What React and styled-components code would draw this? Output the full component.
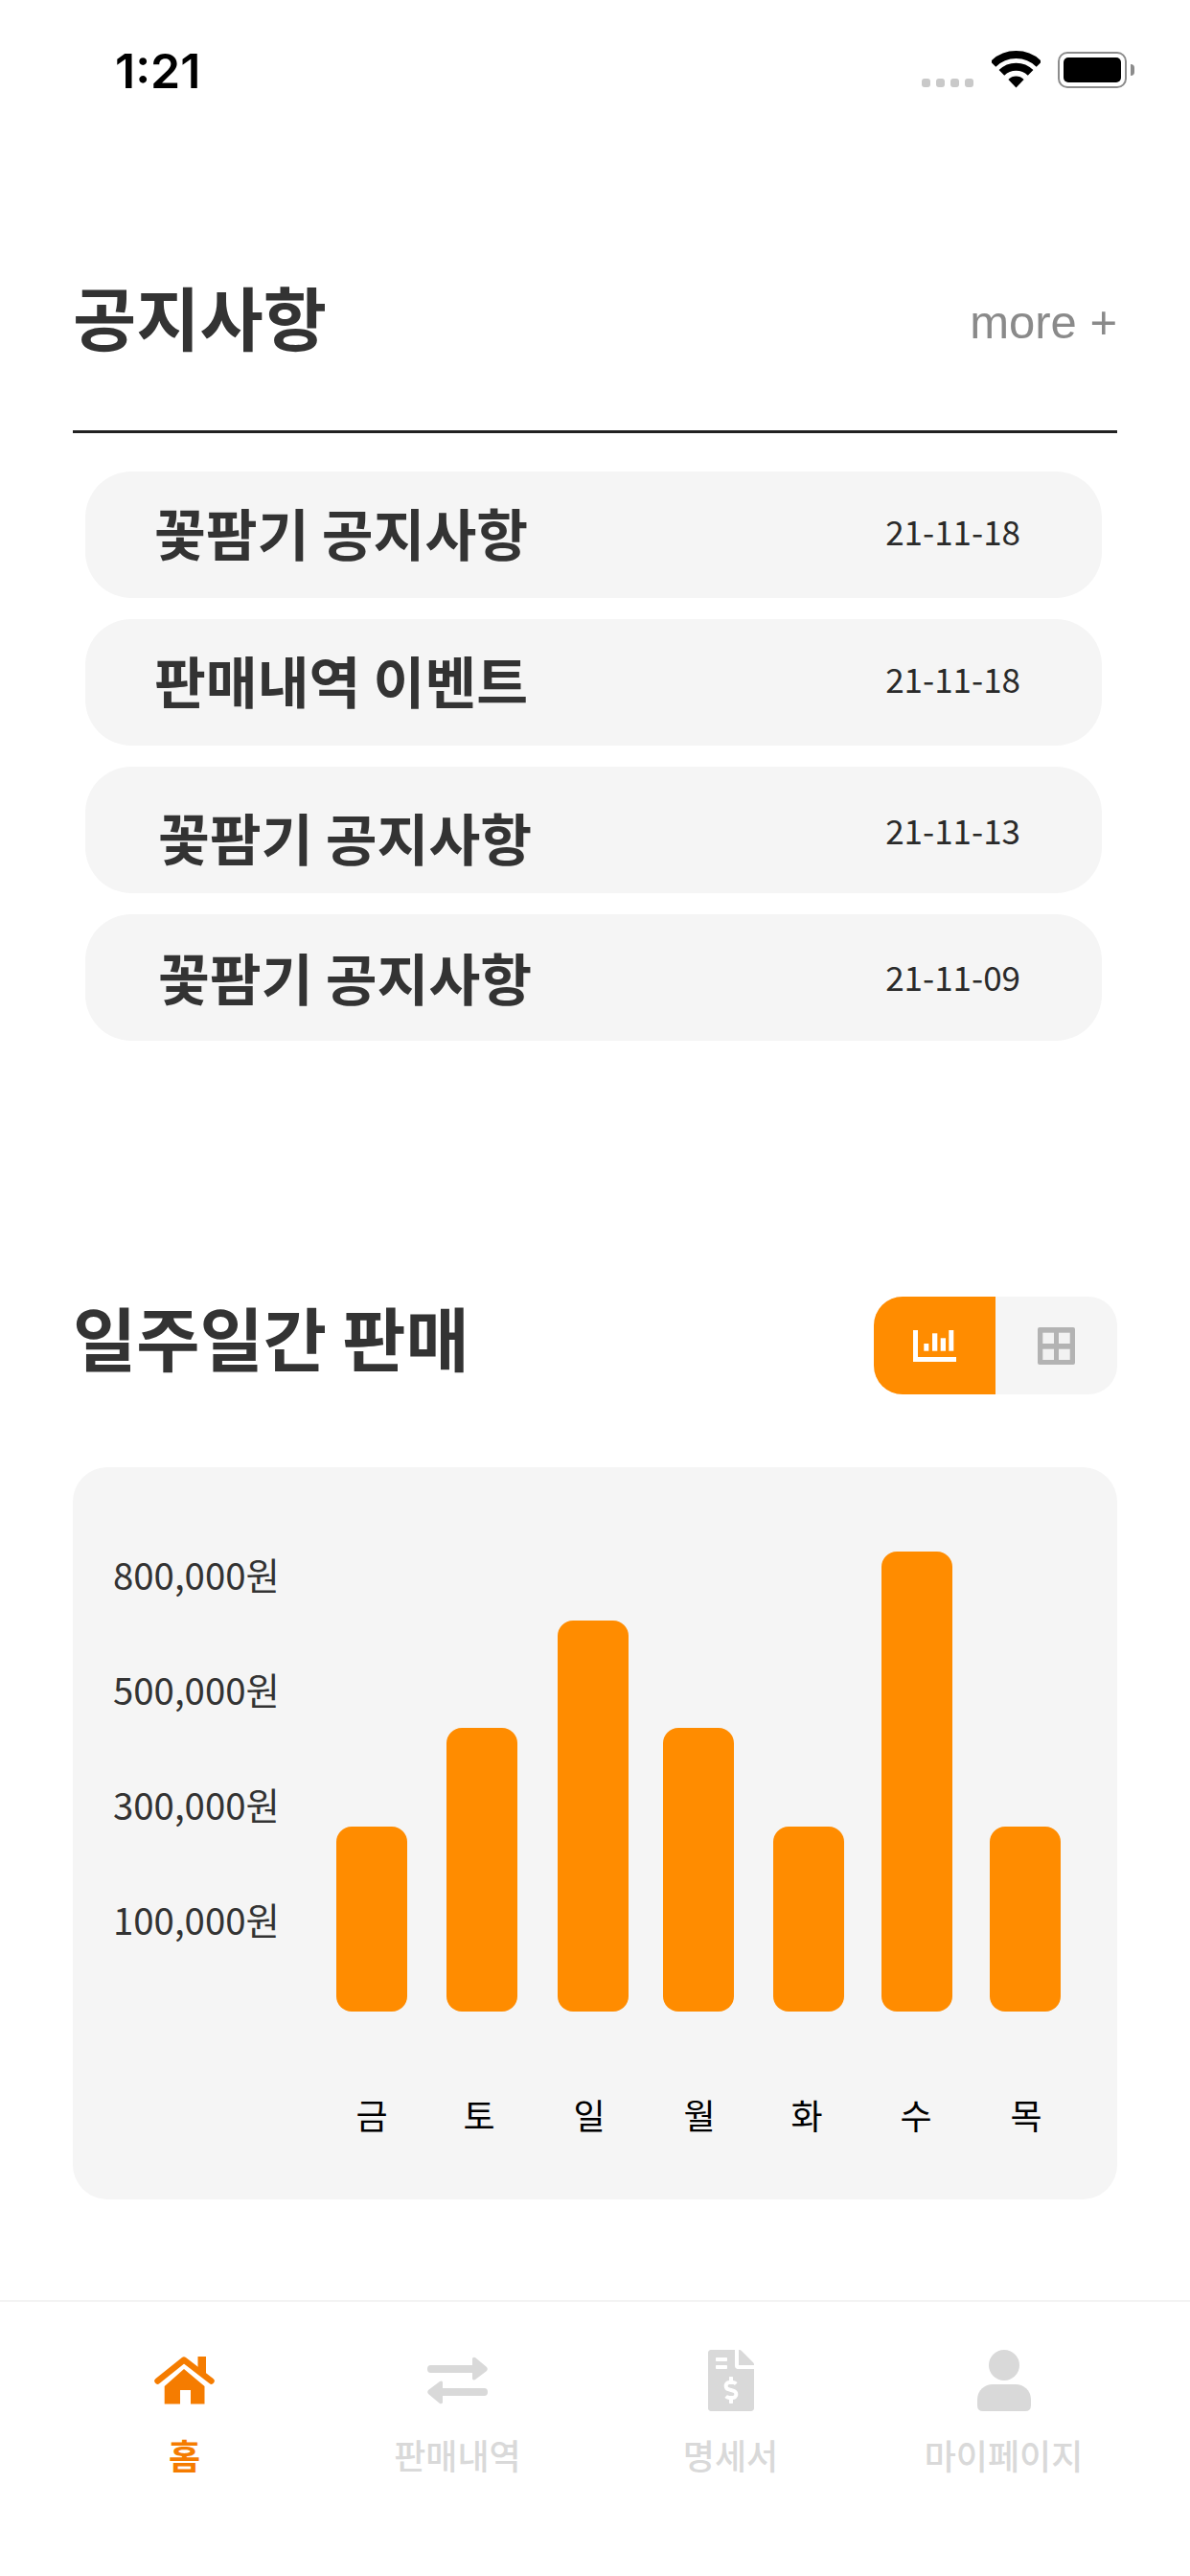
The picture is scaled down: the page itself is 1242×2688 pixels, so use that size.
import React from "react";
import styled, { createGlobalStyle } from "styled-components";
import { FaFileInvoiceDollar } from "react-icons/fa";

const KR = `"Noto Sans CJK KR", "Noto Sans", sans-serif`;

const notices = [
  { title: "꽃팜기 공지사항", date: "21-11-18", inset: 72, drop: -6, dateDrop: -8 },
  { title: "판매내역 이벤트", date: "21-11-18", inset: 72, drop: -6, dateDrop: -8 },
  { title: "꽃팜기 공지사항", date: "21-11-13", inset: 76, drop: 14, dateDrop: 0 },
  { title: "꽃팜기 공지사항", date: "21-11-09", inset: 76, drop: -2, dateDrop: -2 },
];

const axis = ["800,000원", "500,000원", "300,000원", "100,000원"];

const bars = [
  { height: 193, gap: 0 },
  { height: 296, gap: 41 },
  { height: 408, gap: 42 },
  { height: 296, gap: 36 },
  { height: 193, gap: 41 },
  { height: 480, gap: 39 },
  { height: 193, gap: 39 },
];

const days = [
  { label: "금", gap: 0 },
  { label: "토", gap: 52 },
  { label: "일", gap: 55 },
  { label: "월", gap: 55 },
  { label: "화", gap: 52 },
  { label: "수", gap: 54 },
  { label: "목", gap: 55 },
];

const App = () => {
  return (
    <Page>
      <GlobalStyle />
      <StatusBar>
        <Clock>1:21</Clock>
        <StatusIcons>
          <SignalDots>
            <i />
            <i />
            <i />
            <i />
          </SignalDots>
          <WifiIcon />
          <Battery>
            <BatteryFill />
          </Battery>
          <BatteryNub />
        </StatusIcons>
      </StatusBar>

      <Section>
        <NoticeHead>
          <Title>공지사항</Title>
          <More>more +</More>
        </NoticeHead>
        <Divider />
        <NoticeList>
          {notices.map((n, i) => (
            <NoticeRow key={i} $inset={n.inset}>
              <NoticeTitle $drop={n.drop}>{n.title}</NoticeTitle>
              <NoticeDate $drop={n.dateDrop}>{n.date}</NoticeDate>
            </NoticeRow>
          ))}
        </NoticeList>

        <WeekHead>
          <WeekTitle>일주일간 판매</WeekTitle>
          <Toggle>
            <ToggleButton $active>
              <ChartIcon />
            </ToggleButton>
            <ToggleButton>
              <GridIcon />
            </ToggleButton>
          </Toggle>
        </WeekHead>

        <ChartCard>
          <Axis>
            {axis.map((a) => (
              <AxisLabel key={a}>{a}</AxisLabel>
            ))}
          </Axis>
          <Plot>
            <BarRow>
              {bars.map((b, i) => (
                <Bar key={i} $height={b.height} $gap={b.gap} />
              ))}
            </BarRow>
            <DayRow>
              {days.map((d) => (
                <Day key={d.label} $gap={d.gap}>
                  {d.label}
                </Day>
              ))}
            </DayRow>
          </Plot>
        </ChartCard>
      </Section>

      <TabBar>
        <Tab $active>
          <TabIcon>
            <HomeIcon />
          </TabIcon>
          <TabLabel $active>홈</TabLabel>
        </Tab>
        <Tab>
          <TabIcon>
            <SwapIcon />
          </TabIcon>
          <TabLabel>판매내역</TabLabel>
        </Tab>
        <Tab>
          <TabIcon>
            <FaFileInvoiceDollar size={64} color="#d9d9d9" />
          </TabIcon>
          <TabLabel>명세서</TabLabel>
        </Tab>
        <Tab>
          <TabIcon>
            <PersonIcon />
          </TabIcon>
          <TabLabel>마이페이지</TabLabel>
        </Tab>
      </TabBar>
    </Page>
  );
};

export default App;

const WifiIcon = () => (
  <svg width="51" height="39" viewBox="0 0 51 39">
    <path d="M1.5 14A34 34 0 0 1 49.5 14" fill="none" stroke="#000" strokeWidth="8" />
    <path d="M10.4 22.9A21.4 21.4 0 0 1 40.6 22.9" fill="none" stroke="#000" strokeWidth="8" />
    <path d="M25.5 38.5L17.4 30A11.4 11.4 0 0 1 33.6 30Z" fill="#000" />
  </svg>
);

const ChartIcon = () => (
  <svg width="45" height="33" viewBox="0 0 45 33" fill="#fff">
    <path d="M0 0h5v28h40v5H0z" />
    <rect x="11.3" y="14" width="5" height="7.7" />
    <rect x="20" y="3.3" width="5.3" height="18.4" />
    <rect x="28.7" y="8.3" width="5.3" height="13.4" />
    <rect x="37.3" y="0" width="5" height="21.7" />
  </svg>
);

const GridIcon = () => (
  <svg width="39" height="39" viewBox="0 0 39 39">
    <rect width="39" height="39" rx="2" fill="#b3b3b3" />
    <rect x="5.3" y="5.7" width="11.7" height="11.3" fill="#f2f2f2" />
    <rect x="22" y="5.7" width="11.7" height="11.3" fill="#f2f2f2" />
    <rect x="5.3" y="22.7" width="11.7" height="11.3" fill="#f2f2f2" />
    <rect x="22" y="22.7" width="11.7" height="11.3" fill="#f2f2f2" />
  </svg>
);

const HomeIcon = () => (
  <svg width="63" height="50" viewBox="0 0 63 50" fill="#f57c00">
    <rect x="45.500" y="0" width="8.500" height="18" />
    <path
      d="M3.500 25.500L31 3.500L59.500 25.500"
      fill="none"
      stroke="#f57c00"
      strokeWidth="6.500"
      strokeLinecap="round"
      strokeLinejoin="round"
    />
    <path d="M10.700 31L31 13L52.500 31V49.500H38V35H27V49.500H10.700Z" />
  </svg>
);

const SwapIcon = () => (
  <svg width="63" height="50" viewBox="0 0 63 50" fill="#d9d9d9">
    <path d="M3.500 9H47V2.500Q47 0 50 1L62 11Q63.500 13 62 15L50 24Q47 25.500 47 22.500V17H3.500Q0 17 0 13T3.500 9Z" />
    <path d="M59.500 33H16V27.500Q16 24.500 13 26L1 35Q-.5 37 1 39L13 49Q16 50 16 47.500V41H59.500Q63 41 63 37T59.500 33Z" />
  </svg>
);

const PersonIcon = () => (
  <svg width="56" height="64" viewBox="0 0 56 64" fill="#d9d9d9">
    <ellipse cx="28" cy="16" rx="16" ry="16" />
    <path d="M0 58V52C0 42 8 36 16 36H40C48 36 56 42 56 52V58Q56 64 50 64H6Q0 64 0 58Z" />
  </svg>
);

const GlobalStyle = createGlobalStyle`
  html, body {
    margin: 0;
    padding: 0;
    background: #fff;
  }
  * {
    box-sizing: border-box;
  }
`;

const Page = styled.div`
  width: 1242px;
  height: 2688px;
  overflow: hidden;
  background: #fff;
  font-family: ${KR};
`;

const StatusBar = styled.div`
  display: flex;
  justify-content: space-between;
  height: 130px;
  padding: 48px 58px 0 120px;
`;

const Clock = styled.div`
  font-family: "Inter", "Liberation Sans", sans-serif;
  font-weight: 600;
  font-size: 50px;
  line-height: 52px;
  height: 52px;
  color: #000;
`;

const StatusIcons = styled.div`
  display: flex;
  align-items: flex-end;
  height: 44px;
`;

const SignalDots = styled.div`
  display: flex;
  gap: 6px;
  margin-right: 19px;
  padding-bottom: 1px;

  i {
    display: block;
    width: 9px;
    height: 9px;
    border-radius: 3px;
    background: #c9c9c9;
  }
`;

const Battery = styled.div`
  width: 72px;
  height: 38px;
  margin-left: 18px;
  padding: 4px;
  border: 2px solid #8c8c8c;
  border-radius: 10px;
  background: #fff;
`;

const BatteryFill = styled.div`
  width: 100%;
  height: 100%;
  border-radius: 5px;
  background: #000;
`;

const BatteryNub = styled.div`
  width: 4px;
  height: 12px;
  margin: 0 0 13px 4px;
  border-radius: 0 4px 4px 0;
  background: #8c8c8c;
`;

const Section = styled.div`
  padding: 0 76px;
`;

const NoticeHead = styled.div`
  display: flex;
  align-items: center;
  justify-content: space-between;
  height: 90px;
  margin-top: 160px;
`;

const Title = styled.h1`
  margin: 0;
  padding-bottom: 12px;
  font-size: 72px;
  font-weight: 700;
  line-height: 90px;
  color: #333;
`;

const More = styled.span`
  font-family: "Liberation Sans", sans-serif;
  font-size: 49px;
  color: #8a8a8a;
  padding-top: 2px;
`;

const Divider = styled.div`
  height: 3px;
  margin-top: 69px;
  background: #222;
`;

const NoticeList = styled.div`
  display: flex;
  flex-direction: column;
  gap: 22px;
  margin: 40px 16px 0 13px;
`;

const NoticeRow = styled.div`
  display: flex;
  align-items: center;
  justify-content: space-between;
  height: 132px;
  padding: 0 85px 0 ${(p) => p.$inset}px;
  border-radius: 48px;
  background: #f5f5f5;
`;

const NoticeTitle = styled.div`
  padding-top: ${(p) => Math.max(p.$drop, 0)}px;
  padding-bottom: ${(p) => Math.max(-p.$drop, 0)}px;
  font-size: 58.5px;
  font-weight: 700;
  line-height: 80px;
  color: #333;
`;

const NoticeDate = styled.div`
  padding-top: ${(p) => Math.max(p.$drop, 0)}px;
  padding-bottom: ${(p) => Math.max(-p.$drop, 0)}px;
  font-size: 35px;
  line-height: 50px;
  color: #2a2a2a;
`;

const WeekHead = styled.div`
  display: flex;
  align-items: center;
  justify-content: space-between;
  height: 102px;
  margin-top: 267px;
`;

const WeekTitle = styled.h2`
  margin: 0;
  padding-bottom: 20px;
  font-size: 72px;
  font-weight: 700;
  line-height: 90px;
  color: #333;
`;

const Toggle = styled.div`
  display: flex;
  height: 102px;
  border-radius: 30px;
  overflow: hidden;
  background: #f5f5f5;
`;

const ToggleButton = styled.div`
  display: flex;
  align-items: center;
  justify-content: center;
  width: 127px;
  background: ${(p) => (p.$active ? "#ff8c00" : "transparent")};
`;

const ChartCard = styled.div`
  display: flex;
  height: 764px;
  margin-top: 76px;
  padding-left: 42px;
  border-radius: 36px;
  background: #f5f5f5;
`;

const Axis = styled.div`
  width: 233px;
  padding-top: 51px;
`;

const AxisLabel = styled.div`
  font-size: 38.4px;
  line-height: 120px;
  color: #333;
`;

const Plot = styled.div`
  display: flex;
  flex-direction: column;
  padding-top: 88px;
`;

const BarRow = styled.div`
  display: flex;
  align-items: flex-end;
  height: 480px;
`;

const Bar = styled.div`
  width: 74px;
  height: ${(p) => p.$height}px;
  margin-left: ${(p) => p.$gap}px;
  border-radius: 16px;
  background: #ff8c00;
`;

const DayRow = styled.div`
  display: flex;
  margin-top: 82px;
  padding-left: 7px;
`;

const Day = styled.div`
  width: 60px;
  margin-left: ${(p) => p.$gap}px;
  font-size: 36px;
  line-height: 50px;
  text-align: center;
  color: #000;
`;

const TabBar = styled.div`
  display: grid;
  grid-template-columns: repeat(4, 285px);
  height: 286px;
  margin-top: 105px;
  padding: 50px 50px 0;
  border-top: 2px solid #f3f3f3;
`;

const Tab = styled.div`
  display: flex;
  flex-direction: column;
  align-items: center;
  gap: 20px;
`;

const TabIcon = styled.div`
  display: flex;
  align-items: center;
  justify-content: center;
  height: 64px;
`;

const TabLabel = styled.div`
  font-size: 36px;
  font-weight: ${(p) => (p.$active ? 700 : 500)};
  line-height: 50px;
  color: ${(p) => (p.$active ? "#f57c00" : "#d9d9d9")};
`;
